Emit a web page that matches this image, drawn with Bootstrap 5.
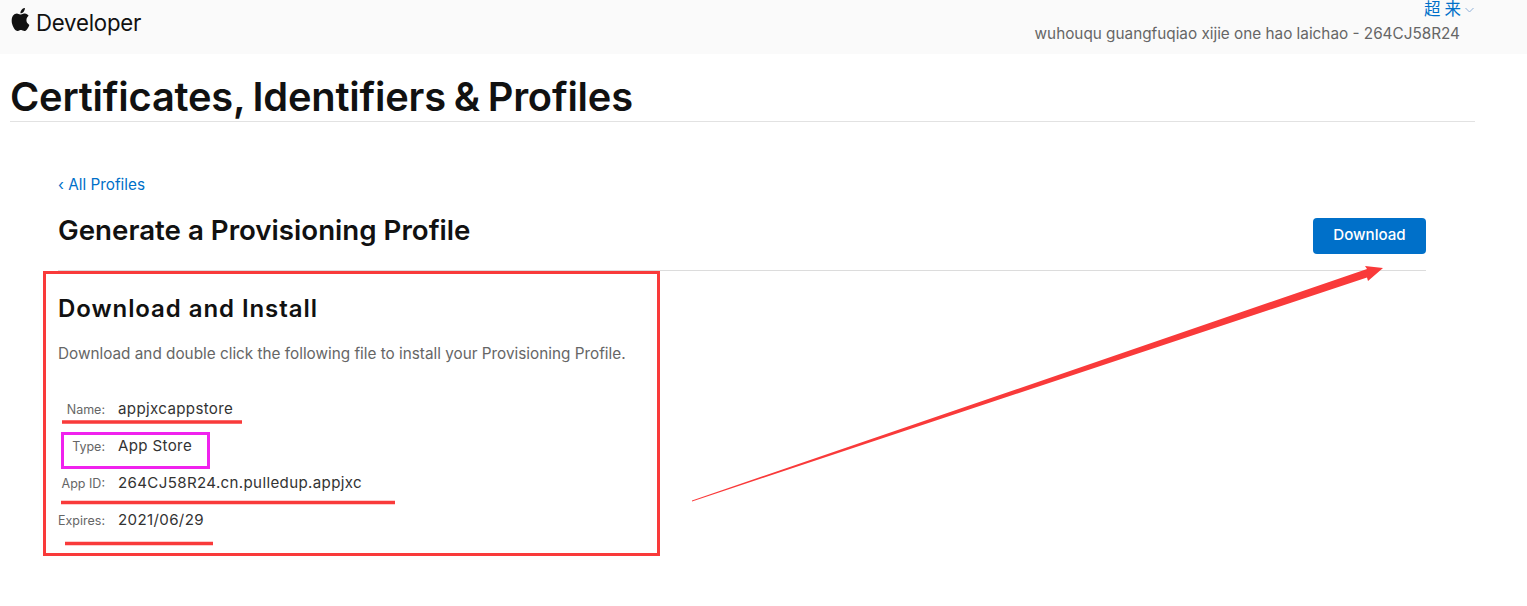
<!DOCTYPE html>
<html lang="en">
<head>
    <meta charset="UTF-8">
    <meta name="viewport" content="width=device-width, initial-scale=1.0">
    <title>Certificates, Identifiers &amp; Profiles</title>
    <link href="https://cdn.jsdelivr.net/npm/bootstrap@5.3.0/dist/css/bootstrap.min.css" rel="stylesheet">
    <style>
        body { font-family: Inter, "Noto Sans CJK SC", sans-serif; background: #fff; color: #111; overflow: hidden; }
        .shot { position: relative; width: 1527px; height: 606px; overflow: hidden; }
        .top-bar { height: 54px; background: #fafafa; padding: 0 52px 0 11px; }
        .brand { font-size: 22.2px; line-height: 28px; color: #111; letter-spacing: -0.2px; padding-top: 9px; gap: 6px; }
        .brand svg { margin-top: -1px; }
        .acct { width: 500px; }
        .acct-name { color: #0070c9; font-size: 16.5px; line-height: 18px; letter-spacing: 4px; padding-right: 1px; }
        .acct-name svg { vertical-align: 2px; }
        .acct-team { color: #666; font-size: 15.3px; line-height: 20px; padding-right: 15px; margin-top: 6px; }
        .page-title { margin: 0 52px 0 10px; height: 68px; border-bottom: 1px solid #e2e2e2; }
        .page-title h1 { font-size: 39.8px; font-weight: 600; line-height: 46px; margin: 0; padding-top: 20px; letter-spacing: -0.2px; word-spacing: -2px; color: #111; }
        .main-pane { margin: 0 101px 0 58px; }
        .back-link { color: #0070c9; font-size: 15.3px; line-height: 20px; text-decoration: none; display: block; margin-top: 53px; }
        .head-row { height: 76px; border-bottom: 1px solid #dcdcdc; }
        .head-row h2 { font-size: 27.7px; font-weight: 600; line-height: 32px; margin: 0; padding-top: 19px; color: #111; }
        .dl-btn { width: 113px; height: 36px; margin-top: 23px; background: #0070c9; border: 0; border-radius: 4px; color: #fff; font-size: 15.1px; font-weight: 500; padding: 0 0 2px; }
        .sub-title { font-size: 24px; font-weight: 600; line-height: 28px; margin: 24px 0 0; letter-spacing: .93px; color: #111; }
        .intro { color: #666; font-size: 15.3px; line-height: 20px; margin: 21px 0 0; }
        .info-grid { margin-top: 35px; display: grid; grid-template-columns: 47px 1fr; column-gap: 13px; grid-auto-rows: 37px; width: 500px; }
        .info-key { color: #666; font-size: 12.5px; line-height: 20px; white-space: nowrap; padding-top: 1px; display: flex; justify-content: flex-end; }
        .info-val { color: #333; font-size: 15.1px; line-height: 20px; letter-spacing: .35px; }
        .markup { position: absolute; left: 0; top: 0; pointer-events: none; }
    </style>
</head>
<body>
    <div class="shot">
        <div class="top-bar d-flex justify-content-between">
            <div class="brand d-flex align-items-start">
                <svg width="19" height="23" viewBox="1 0 14 16" preserveAspectRatio="none" fill="#111"><path d="M11.182.008C11.148-.03 9.923.023 8.857 1.18c-1.066 1.156-.902 2.482-.878 2.516.024.034 1.52.087 2.475-1.258.955-1.345.762-2.391.728-2.43Zm3.314 11.733c-.048-.096-2.325-1.234-2.113-3.422.212-2.189 1.675-2.789 1.698-2.854.023-.065-.597-.79-1.254-1.157a3.692 3.692 0 0 0-1.563-.434c-.108-.003-.483-.095-1.254.116-.508.139-1.653.589-1.968.607-.316.018-1.256-.522-2.267-.665-.647-.1-1.333.105-1.824.302-.49.196-1.422.754-2.074 2.237-.652 1.482-.311 3.83-.067 4.56.244.729.625 1.924 1.273 2.796.576.984 1.34 1.667 1.659 1.899.319.232 1.219.386 1.843.067.502-.308 1.408-.485 1.766-.472.357.013 1.061.154 1.782.539.571.197 1.111.115 1.652-.105.541-.221 1.324-1.059 2.238-2.758.347-.79.505-1.217.473-1.282Z"/></svg>
                <span>Developer</span>
            </div>
            <div class="acct text-end">
                <div class="acct-name">超来<svg width="9" height="6" viewBox="0 0 9 6" fill="none" stroke="#8fb0d8"><path d="M.5 1l4 4 4-4"/></svg></div>
                <div class="acct-team">wuhouqu guangfuqiao xijie one hao laichao - 264CJ58R24</div>
            </div>
        </div>
        <div class="page-title"><h1>Certificates, Identifiers &amp; Profiles</h1></div>
        <div class="main-pane">
            <a class="back-link" href="#">‹ All Profiles</a>
            <div class="head-row d-flex justify-content-between">
                <h2>Generate a Provisioning Profile</h2>
                <button class="dl-btn" type="button">Download</button>
            </div>
            <h3 class="sub-title">Download and Install</h3>
            <p class="intro">Download and double click the following file to install your Provisioning Profile.</p>
            <div class="info-grid">
                <div class="info-key">Name:</div><div class="info-val">appjxcappstore</div>
                <div class="info-key">Type:</div><div class="info-val">App Store</div>
                <div class="info-key">App ID:</div><div class="info-val">264CJ58R24.cn.pulledup.appjxc</div>
                <div class="info-key">Expires:</div><div class="info-val">2021/06/29</div>
            </div>
        </div>
        <svg class="markup" width="1527" height="606" fill="none" stroke="#f93a3a">
            <rect x="44.5" y="272.5" width="614" height="282" stroke-width="3"/>
            <rect x="62.5" y="433.5" width="146" height="34" stroke="#f022ee" stroke-width="3"/>
            <path d="M62 422h180M61 502.5h334M65 543.5h148" stroke-width="3.5"/>
            <path d="M692 500.500L1367 269 1365 266 1383 268 1368 281 1367 277.500 692 501.500Z" fill="#f93a3a" stroke="none"/>
        </svg>
    </div>
    <script src="https://cdn.jsdelivr.net/npm/bootstrap@5.3.0/dist/js/bootstrap.bundle.min.js"></script>
</body>
</html>
